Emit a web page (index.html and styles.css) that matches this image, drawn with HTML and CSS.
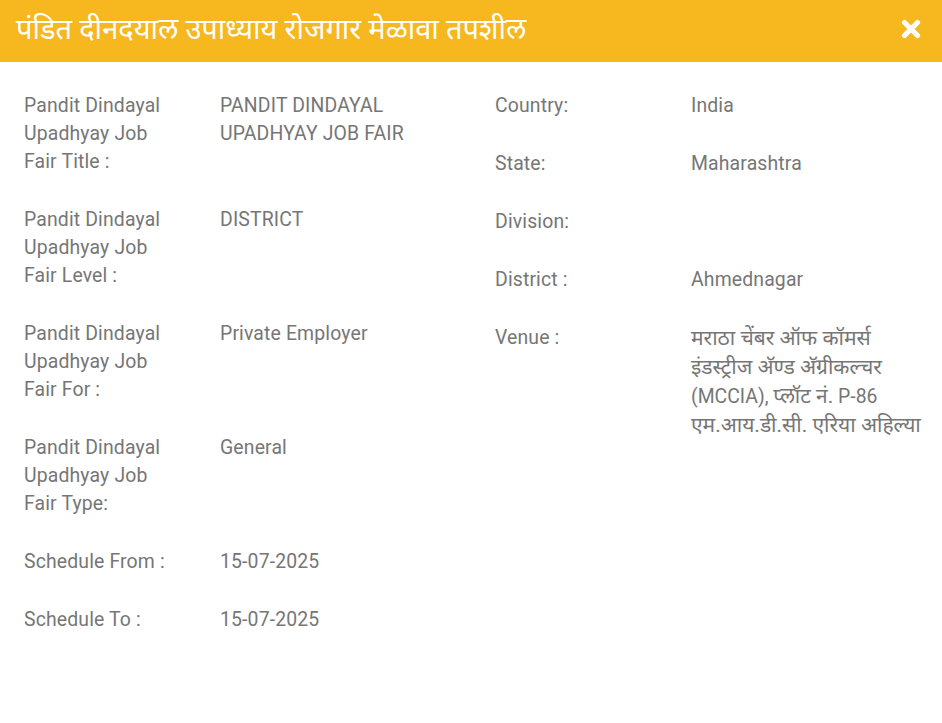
FILE: index.html
```html
<!DOCTYPE html>
<html lang="mr">
<head>
<meta charset="utf-8">
<title>पंडित दीनदयाल उपाध्याय रोजगार मेळावा तपशील</title>
<link rel="stylesheet" href="styles.css">
</head>
<body>
<div class="modal">
  <header class="modal-header">
    <h1 class="modal-title">पंडित दीनदयाल उपाध्याय रोजगार मेळावा तपशील</h1>
    <button class="close" aria-label="Close">
      <svg width="20" height="20" viewBox="0 0 20 20"><path d="M3.5 3.5 L16.5 16.5 M16.5 3.5 L3.5 16.5" stroke="#fff" stroke-width="5.2" stroke-linecap="round"/></svg>
    </button>
  </header>
  <div class="modal-body">
    <div class="col">
      <div class="row"><div class="label">Pandit Dindayal Upadhyay Job Fair Title :</div><div class="value">PANDIT DINDAYAL UPADHYAY JOB FAIR</div></div>
      <div class="row"><div class="label">Pandit Dindayal Upadhyay Job Fair Level :</div><div class="value">DISTRICT</div></div>
      <div class="row"><div class="label">Pandit Dindayal Upadhyay Job Fair For :</div><div class="value">Private Employer</div></div>
      <div class="row"><div class="label">Pandit Dindayal Upadhyay Job Fair Type:</div><div class="value">General</div></div>
      <div class="row"><div class="label">Schedule From :</div><div class="value">15-07-2025</div></div>
      <div class="row"><div class="label">Schedule To :</div><div class="value">15-07-2025</div></div>
    </div>
    <div class="col">
      <div class="row"><div class="label">Country:</div><div class="value">India</div></div>
      <div class="row"><div class="label">State:</div><div class="value">Maharashtra</div></div>
      <div class="row"><div class="label">Division:</div><div class="value"></div></div>
      <div class="row"><div class="label">District :</div><div class="value">Ahmednagar</div></div>
      <div class="row"><div class="label">Venue :</div><div class="value venue"><span class="deva">मराठा चेंबर ऑफ कॉमर्स</span><br><span class="deva">इंडस्ट्रीज अ‍ॅण्ड अ‍ॅग्रीकल्चर</span><br>(MCCIA), <span class="deva">प्लॉट नं.</span> P-86<br><span class="deva">एम.आय.डी.सी. एरिया अहिल्या</span></div></div>
    </div>
  </div>
</div>
</body>
</html>
```
FILE: styles.css
```css
html, body {
  margin: 0;
  padding: 0;
  background: #ffffff;
}
body {
  font-family: Roboto, "Noto Sans", "Noto Sans Devanagari", sans-serif;
  color: #767676;
}
.modal {
  width: 942px;
  min-height: 723px;
  background: #fff;
}
.modal-header {
  height: 62px;
  background: #f6b71f;
  display: flex;
  align-items: center;
  justify-content: space-between;
  padding: 0 21px 0 16px;
  box-sizing: border-box;
}
.modal-title {
  margin: 0;
  color: #ffffff;
  font-size: 29px;
  font-weight: 400;
  line-height: 1;
  padding-bottom: 4px;
}
.close {
  background: none;
  border: 0;
  padding: 0;
  margin: 0 0 4px 0;
  width: 20px;
  height: 20px;
  display: flex;
  cursor: pointer;
}
.modal-body {
  display: grid;
  grid-template-columns: 471px 1fr;
  padding: 30px 15px 0 24px;
}
.col {
  display: flex;
  flex-direction: column;
  gap: 30px;
}
.row {
  display: grid;
  grid-template-columns: 196px 1fr;
  font-size: 19.4px;
  letter-spacing: 0.15px;
  line-height: 28px;
  min-height: 28px;
}
.col:first-child .label {
  padding-right: 40px;
}
.col:first-child .value {
  padding-right: 20px;
}
.venue {
  white-space: nowrap;
  letter-spacing: 0;
}
.deva {
  font-size: 21px;
}
```
